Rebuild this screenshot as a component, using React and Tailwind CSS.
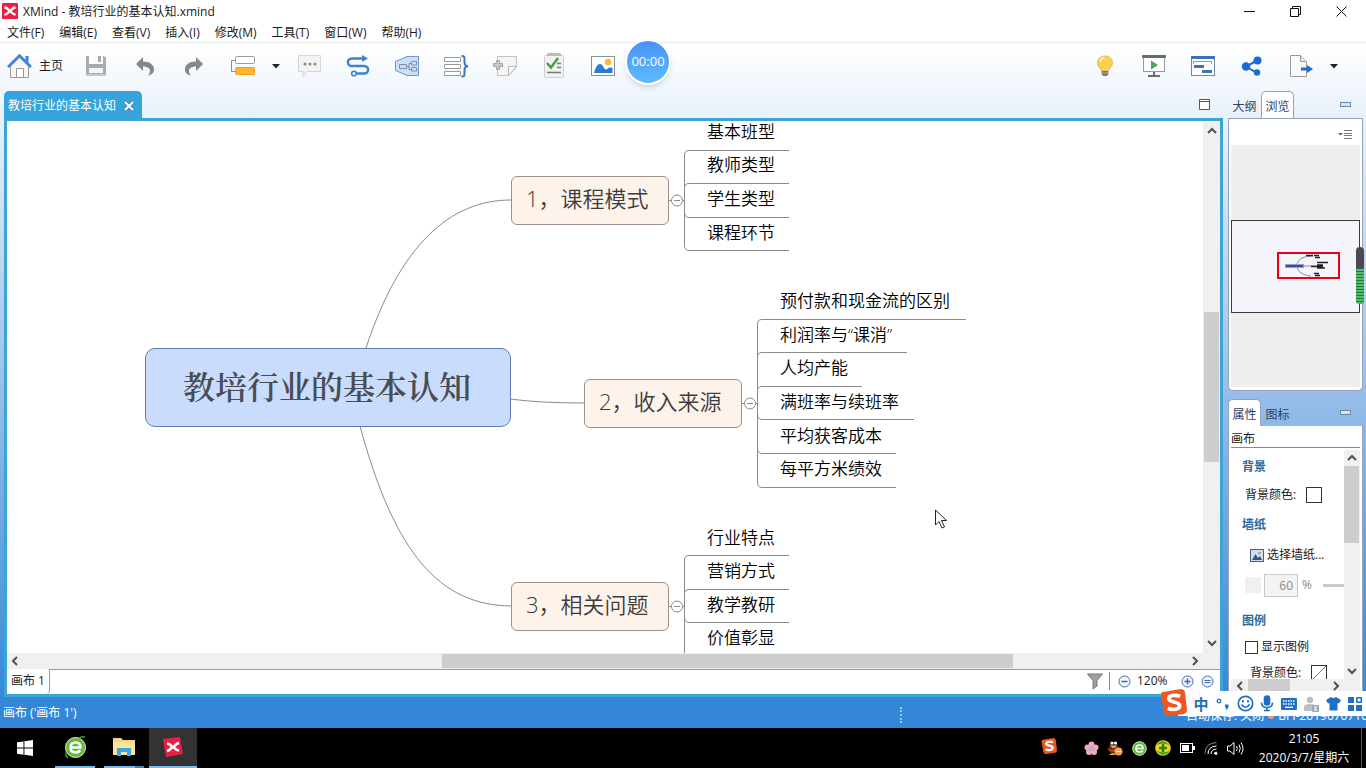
import { useState } from 'react';

const menus = ['文件(F)', '编辑(E)', '查看(V)', '插入(I)', '修改(M)', '工具(T)', '窗口(W)', '帮助(H)'];

// Positions are in canvas coordinates
const mainTopics = [
    { text: '1，课程模式', x: 504, y: 55 },
    { text: '2，收入来源', x: 577, y: 258 },
    { text: '3，相关问题', x: 504, y: 461 }
];

const branches = [
    {
        x: 677,
        midY: 79,
        items: [
            { text: '基本班型', y: 12, line: 29, end: 782 },
            { text: '教师类型', y: 45, line: 62, end: 782 },
            { text: '学生类型', y: 79, line: 96, end: 782 },
            { text: '课程环节', y: 113, line: 129, end: 782 }
        ]
    },
    {
        x: 750,
        midY: 282,
        items: [
            { text: '预付款和现金流的区别', y: 181, line: 198, end: 959 },
            { text: '利润率与“课消”', y: 215, line: 231, end: 900 },
            { text: '人均产能', y: 248, line: 265, end: 855 },
            { text: '满班率与续班率', y: 282, line: 298, end: 907 },
            { text: '平均获客成本', y: 316, line: 332, end: 889 },
            { text: '每平方米绩效', y: 349, line: 366, end: 889 }
        ]
    },
    {
        x: 677,
        midY: 485,
        items: [
            { text: '行业特点', y: 418, line: 434, end: 782 },
            { text: '营销方式', y: 451, line: 468, end: 782 },
            { text: '教学教研', y: 485, line: 501, end: 782 },
            { text: '价值彰显', y: 518, line: 536, end: 782 }
        ]
    }
];

const XMindMark = () => (
    <svg width="16" height="16" viewBox="0 0 16 16">
        <rect width="16" height="16" rx="1" fill="#ee1c46" />
        <path d="M2.500 4.500C6 4.500 6 7 8 8C10 7 10 4.500 13.500 4.500M2.500 11.500C6 11.500 6 9 8 8C10 9 10 11.500 13.500 11.500" stroke="#fff" strokeWidth="2.400" fill="none" />
    </svg>
);

const HomeIcon = () => (
    <svg width="26" height="26" viewBox="0 0 26 26" fill="none">
        <path d="M4.500 13V24.500H22.500V13L13.500 4.500Z" fill="#f7f7f7" stroke="#9a9a9a" />
        <path d="M10.500 24V15.500H17.500V24" fill="#fff" stroke="#9a9a9a" />
        <path d="M19.500 3H22.500V10L19.500 7Z" fill="#3f7fd0" />
        <path d="M2 14L13.500 2.500L25 14" stroke="#3f85dc" strokeWidth="2.600" />
    </svg>
);

const SaveIcon = () => (
    <svg width="24" height="24" viewBox="0 0 24 24">
        <path d="M2 2H5V10H19V2H20L22 4V22H2Z" fill="#ababab" />
        <path d="M14 2H17V8H14Z" fill="#ababab" />
        <rect x="5" y="14" width="14" height="5" fill="#f4f4f4" />
        <rect x="2" y="20" width="20" height="2" fill="#c8c8c8" />
    </svg>
);

const UndoIcon = () => (
    <svg width="22" height="22" viewBox="0 0 22 22">
        <path d="M2 9L9 2V6.500C16 6.500 20 10 20 14.500C20 18 17.500 20 14 20.500C15.500 18.500 16 17.500 16 16C16 13 13 11.500 9 11.500V16Z" fill="#858789" />
    </svg>
);

const RedoIcon = () => (
    <svg width="22" height="22" viewBox="0 0 22 22">
        <path d="M20 9L13 2V6.500C6 6.500 2 10 2 14.500C2 18 4.500 20 8 20.500C6.500 18.500 6 17.500 6 16C6 13 9 11.500 13 11.500V16Z" fill="#858789" />
    </svg>
);

const TopicIcon = () => (
    <svg width="26" height="24" viewBox="0 0 26 24" fill="none">
        <path d="M5 6.500H1.500V17.500H5" stroke="#8a8a8a" />
        <rect x="5.500" y="2.500" width="19" height="7" rx="1" fill="#fff" stroke="#9b9b9b" />
        <rect x="5.500" y="13.500" width="19" height="7" rx="1" fill="#fbb62c" stroke="#eda01c" />
    </svg>
);

const CommentIcon = () => (
    <svg width="26" height="26" viewBox="0 0 26 26">
        <path d="M2.500 2.500H24.500V18.500H11L7 23.500V18.500H2.500Z" fill="#f3f3f3" stroke="#d6d6d6" />
        <circle cx="9" cy="11" r="1.500" fill="#888" />
        <circle cx="14" cy="11" r="1.500" fill="#888" />
        <circle cx="19" cy="11" r="1.500" fill="#888" />
    </svg>
);

const RelationIcon = () => (
    <svg width="24" height="24" viewBox="0 0 24 24" fill="none">
        <path d="M18 4.500H6C0.500 4.500 0.500 12 6 12H18C23.500 12 23.500 19.500 18 19.500H10" stroke="#3c82cc" strokeWidth="2.400" />
        <path d="M16 1L22 4.500L16 8Z" fill="#3c82cc" />
        <circle cx="8" cy="19.500" r="2.300" fill="#fff" stroke="#3c82cc" strokeWidth="1.600" />
    </svg>
);

const BoundaryIcon = () => (
    <svg width="26" height="24" viewBox="0 0 26 24" fill="none">
        <path d="M1.500 7.500L13 2.500H24.500V21.500H13L1.500 16.500Z" fill="#cadff5" stroke="#6d97c8" />
        <path d="M5.500 10.500H12.500V14.500H5.500ZM17.500 7.500H22.500V11H17.500ZM17.500 13.500H22.500V17H17.500ZM12.500 12.500H15V9.500H17.500M15 12.500V15.500H17.500" stroke="#7f93ab" />
    </svg>
);

const SummaryIcon = () => (
    <svg width="26" height="24" viewBox="0 0 26 24" fill="none">
        <path d="M1.500 3.500H17.500V7.500H1.500ZM1.500 10.500H17.500V14.500H1.500ZM1.500 17.500H17.500V21.500H1.500Z" fill="#fff" stroke="#9a9a9a" />
        <path d="M18.500 2C22 2 21.500 3 21.500 8C21.500 11 22.500 12.300 25 12.300C22.500 12.300 21.500 14 21.500 16.500C21.500 21.500 22 22.500 18.500 22.500" stroke="#3a78bf" strokeWidth="2" />
    </svg>
);

const NoteIcon = () => (
    <svg width="26" height="24" viewBox="0 0 26 24">
        <path d="M5.500 2.500H24.500V13L17 21.500H5.500Z" fill="#f5f5f5" stroke="#c3c3c3" />
        <path d="M24.500 12.500H16.500V21.500Z" fill="#fff" stroke="#b8b8b8" />
        <path d="M4.500 6.500H7.500V9.500H10.500V12.500H7.500V15.500H4.500V12.500H1.500V9.500H4.500Z" fill="#c9c9c9" stroke="#a3a3a3" />
    </svg>
);

const TaskIcon = () => (
    <svg width="24" height="28" viewBox="0 0 24 28" fill="none">
        <rect x="2.500" y="3.500" width="19" height="22" rx="1" fill="#f1f1ef" stroke="#cfcfcf" />
        <rect x="5" y="1" width="14" height="3" rx="1" fill="#c9b7a4" />
        <path d="M5 11L9 15.500L16 6" stroke="#4a9a45" strokeWidth="2.400" />
        <path d="M15 11.500H19M15 15.500H19M5 20.500H19" stroke="#777" strokeWidth="1.500" />
    </svg>
);

const ImageIcon = () => (
    <svg width="26" height="24" viewBox="0 0 26 24">
        <rect x="1.500" y="2.500" width="23" height="19" fill="#fff" stroke="#8b8f94" />
        <circle cx="18" cy="8" r="3.200" fill="#fcb930" />
        <path d="M4 19C5 15 7 10 10 10C13 10 14 15.500 16 15.500C18 15.500 18 12.500 22.500 14V19Z" fill="#2e7dcc" />
    </svg>
);

const BulbIcon = () => (
    <svg width="20" height="24" viewBox="0 0 24 28">
        <path d="M12 2C7 2 3 5.500 3 10.300C3 15 7.500 16 8 20H16C16.500 16 21 15 21 10.300C21 5.500 17 2 12 2Z" fill="#fbd052" stroke="#e5a83a" />
        <path d="M6.500 9C6.500 6 8.500 4 11.500 4" stroke="#fff0b8" strokeWidth="2" fill="none" />
        <path d="M8 20H16V24L14 26H10L8 24Z" fill="#777" />
        <path d="M8 22.500H16" stroke="#bbb" />
    </svg>
);

const PresentIcon = () => (
    <svg width="26" height="24" viewBox="0 0 26 24">
        <rect x="2.500" y="3.500" width="21" height="14" fill="#fff" stroke="#999" />
        <rect x="1" y="1" width="24" height="3" rx="1" fill="#6a6a6a" />
        <path d="M10 6.500L17 11L10 15.500Z" fill="#4da356" />
        <path d="M12 18H14V21H19V23H7V21H12Z" fill="#6a6a6a" />
    </svg>
);

const GanttIcon = () => (
    <svg width="26" height="24" viewBox="0 0 26 24">
        <rect x="1.500" y="2.500" width="23" height="19" fill="#fff" stroke="#6f87a6" />
        <rect x="1" y="2" width="24" height="3" fill="#3f73b5" />
        <path d="M3.500 10V7.500H21.500V10" stroke="#8b97a5" fill="none" />
        <rect x="4" y="11" width="10" height="3" fill="#3f73b5" />
        <rect x="12" y="16" width="10" height="3" fill="#3f73b5" />
    </svg>
);

const ShareIcon = () => (
    <svg width="24" height="24" viewBox="0 0 24 24">
        <path d="M18 6L6 12.500L17 19" stroke="#1b68cf" strokeWidth="2" fill="none" />
        <circle cx="17.500" cy="6.500" r="4" fill="#1b6ad6" />
        <circle cx="6" cy="12.500" r="4.200" fill="#1b6ad6" />
        <circle cx="17" cy="18.500" r="3.200" fill="#1b6ad6" />
    </svg>
);

const ExportIcon = () => (
    <svg width="26" height="24" viewBox="0 0 26 24">
        <path d="M2.500 1.500H12.500L18.500 7.500V22.500H2.500Z" fill="#f9f9f9" stroke="#9a9a9a" />
        <path d="M12.500 1.500V7.500H18.500" fill="#e6e6e6" stroke="#9a9a9a" />
        <path d="M13 13.500H19V11L25 15L19 19V16.500H13Z" fill="#1e6cd2" />
    </svg>
);

const Caret = () => (
    <svg width="8" height="5" viewBox="0 0 8 5">
        <path d="M0 0H8L4 4.500Z" fill="#222" />
    </svg>
);

const Chevron = ({ dir }) => {
    const paths = {
        up: 'M2 8L6 4L10 8',
        down: 'M2 4L6 8L10 4',
        left: 'M8 2L4 6L8 10',
        right: 'M4 2L8 6L4 10'
    };
    return (
        <svg width="12" height="12" viewBox="0 0 12 12">
            <path d={paths[dir]} stroke="#505050" strokeWidth="2" fill="none" />
        </svg>
    );
};

const SogouMark = ({ size }) => (
    <svg width={size} height={size} viewBox="0 0 26 26">
        <path d="M1 6Q0 4 3 3L20 0Q23 0 24 3L26 20Q26 23 23 24L8 26Q5 26 4 23Z" fill="#f0561d" />
        <path d="M19.500 7C15 5.500 8.500 5.500 8.500 9.500C8.500 13.500 19 11.500 19 16C19 20 12 20.500 7.500 18.500" stroke="#fff" strokeWidth="3.600" fill="none" />
    </svg>
);

const ToolButton = ({ label, children }) => (
    <button aria-label={label} className="w-[49px] h-12 pb-0.5 flex items-center justify-center">
        {children}
    </button>
);

const VerticalScrollbar = () => (
    <div className="w-[17px] shrink-0 bg-[#f0f0f0] flex flex-col">
        <button aria-label="向上滚动" className="h-5 flex items-center justify-center"><Chevron dir="up" /></button>
        <div className="flex-1 flex flex-col">
            <div className="grow-[171] basis-0"></div>
            <div className="grow-[151] basis-0 bg-[#cdcdcd] mx-px"></div>
            <div className="grow-[171] basis-0"></div>
        </div>
        <button aria-label="向下滚动" className="h-5 flex items-center justify-center"><Chevron dir="down" /></button>
    </div>
);

const HorizontalScrollbar = () => (
    <div className="h-4 flex bg-[#f0f0f0]">
        <button aria-label="向左滚动" className="w-4 flex items-center justify-center"><Chevron dir="left" /></button>
        <div className="flex-1 flex">
            <div className="grow-[419] basis-0"></div>
            <div className="grow-[570] basis-0 bg-[#cdcdcd] my-px"></div>
            <div className="grow-[174] basis-0"></div>
        </div>
        <button aria-label="向右滚动" className="w-4 mr-[17px] flex items-center justify-center"><Chevron dir="right" /></button>
    </div>
);

const branchPath = (branch) => {
    const { x, midY, items } = branch;
    const top = items[0].line;
    const bottom = items[items.length - 1].line;
    let d = `M${x + 0.5} ${top + 5}V${bottom - 5}`;
    items.forEach(({ line, end }) => {
        const bend = line < midY ? 5 : -5;
        d += `M${x + 0.5} ${line + bend}Q${x + 0.5} ${line + 0.5} ${x + 5} ${line + 0.5}H${end}`;
    });
    return d;
};

const MindMap = () => (
    <div className="relative flex-1 min-w-0 overflow-hidden bg-white">
        <svg className="absolute inset-0 w-full h-full" fill="none" stroke="#8a8a8a">
            <path d="M504 79C443 79 393 124 359 227" />
            <path d="M503 278Q533 282 577 282" />
            <path d="M353 305C388 434 433 484 504 485" />
            {branches.map((branch) => (
                <g key={branch.midY}>
                    <path d={`M${branch.x - 15} ${branch.midY + 0.5}H${branch.x}`} />
                    <path d={branchPath(branch)} />
                    <circle cx={branch.x - 7} cy={branch.midY + 0.5} r="5.500" fill="#fff" />
                    <path d={`M${branch.x - 10} ${branch.midY + 0.5}h6`} />
                </g>
            ))}
        </svg>

        <div className="absolute left-[138px] top-[227px] w-[366px] h-[79px] pb-1 pr-0.5 rounded-[10px] border border-[#5f7dae] bg-[#c9dcfc] flex items-center justify-center text-[32px] font-semibold text-[#4a4c53] font-['Noto_Serif_CJK_SC','Noto_Sans_CJK_SC',serif] whitespace-nowrap">
            教培行业的基本认知
        </div>

        {mainTopics.map((topic) => (
            <div
                key={topic.text}
                style={{ left: topic.x, top: topic.y }}
                className="absolute w-[158px] h-[49px] pb-1 rounded-md border border-[#a08f86] bg-[#fef3eb] flex items-center pl-3.5 text-[22px] font-[350] text-[#3c3c3c] whitespace-nowrap"
            >
                {topic.text}
            </div>
        ))}

        {branches.map((branch) =>
            branch.items.map((item) => (
                <div
                    key={item.text}
                    style={{ left: branch.x + 23, top: item.y - 12 }}
                    className="absolute h-6 pb-0.5 flex items-center text-[17px] font-[350] text-black whitespace-nowrap"
                >
                    {item.text}
                </div>
            ))
        )}

        {/* Mouse pointer */}
        <svg className="absolute left-[928px] top-[388px]" width="13" height="21" viewBox="0 0 13 21">
            <path d="M0.500 1V16L4 12.500L7 19L9.500 18L6.500 11.500H11.500Z" fill="#fff" stroke="#222" />
        </svg>
    </div>
);

const ZoomIcon = ({ sign }) => (
    <svg width="13" height="13" viewBox="0 0 13 13" fill="none" stroke="#3b6ea8">
        <circle cx="6.500" cy="6.500" r="5.500" fill="#f1f6fc" />
        {sign === '-' && <path d="M3.500 6.500H9.500" strokeWidth="1.500" />}
        {sign === '+' && <path d="M3.500 6.500H9.500M6.500 3.500V9.500" strokeWidth="1.500" />}
        {sign === '=' && <path d="M3.500 5.500H9.500M3.500 7.500H9.500" />}
    </svg>
);

const Editor = () => (
    <section className="flex-1 min-w-0 flex flex-col">
        <div className="h-[27px] flex items-end justify-between">
            <div className="h-[27px] w-[138px] rounded-t-[5px] bg-[#35a4db] text-white flex items-center justify-between pl-1 pr-2 pt-0.5">
                <span className="whitespace-nowrap">教培行业的基本认知</span>
                <button aria-label="关闭标签">
                    <svg width="10" height="10" viewBox="0 0 10 10">
                        <path d="M1 1L9 9M9 1L1 9" stroke="#2b6f96" strokeWidth="3.600" />
                        <path d="M1 1L9 9M9 1L1 9" stroke="#fff" strokeWidth="2.400" />
                    </svg>
                </button>
            </div>
            <button aria-label="最大化" className="mr-[13px] mb-2">
                <svg width="11" height="11" viewBox="0 0 11 11">
                    <path d="M0.500 0.500H10.500V10.500H0.500ZM0.500 2.500H10.500" fill="#fff" stroke="#555" />
                </svg>
            </button>
        </div>

        <div className="flex-1 min-h-0 flex flex-col border-[3px] border-[#3da5d6] bg-white">
            <div className="flex-1 min-h-0 flex">
                <MindMap />
                <VerticalScrollbar />
            </div>
            <HorizontalScrollbar />
            <div className="h-[25px] flex items-stretch">
                <button className="w-[43px] shrink-0 pb-0.5 border-r border-[#999] rounded-br-sm text-center whitespace-nowrap">画布 1</button>
                <div className="flex-1 flex items-center justify-end border-t border-[#999] pb-0.5 pr-[6px]">
                    <button aria-label="筛选">
                        <svg width="16" height="17" viewBox="0 0 16 17">
                            <path d="M0.500 1H15.500L10 7.500V13L6 16V7.500Z" fill="#a0a0a0" stroke="#777" />
                        </svg>
                    </button>
                    <span className="w-px h-[18px] bg-[#888] ml-1.5 mr-2"></span>
                    <button aria-label="缩小"><ZoomIcon sign="-" /></button>
                    <span className="w-[50px] pl-1.5">120%</span>
                    <button aria-label="放大"><ZoomIcon sign="+" /></button>
                    <button aria-label="适合大小" className="ml-[7px]"><ZoomIcon sign="=" /></button>
                </div>
            </div>
        </div>
    </section>
);

const PanelTabs = ({ tabs, active, onSelect }) => (
    <div className="h-[27px] flex items-stretch text-[#2f4263]">
        {tabs.map((tab) => (
            <button
                key={tab}
                onClick={() => onSelect(tab)}
                className={`w-[33px] shrink-0 pt-1 text-center whitespace-nowrap ${active === tab ? 'bg-white rounded-t-[5px] border border-b-0 border-[#93a3b8]' : ''}`}
            >
                {tab}
            </button>
        ))}
        <button aria-label="最小化面板" className="ml-auto mr-3 flex items-center">
            <svg width="11" height="5" viewBox="0 0 11 5">
                <rect x="0.500" y="0.500" width="10" height="4" fill="#d5e5f5" stroke="#6d8aa8" />
            </svg>
        </button>
    </div>
);

const OverviewPanel = () => {
    const [tab, setTab] = useState('浏览');

    return (
        <section className="flex flex-col">
            <PanelTabs tabs={['大纲', '浏览']} active={tab} onSelect={setTab} />
            <div className="h-[273px] bg-white border border-[#93a3b8] rounded-b-[5px] px-0.5 pb-[3px] flex flex-col">
                <div className="h-[26px] flex items-center justify-end pr-2 pt-1">
                    <button aria-label="视图菜单">
                        <svg width="14" height="9" viewBox="0 0 14 9">
                            <path d="M0 3H5L2.500 5.500Z" fill="#666" />
                            <path d="M6 0.500H14M6 3.500H14M6 5.500H14M6 8.500H14" stroke="#777" />
                        </svg>
                    </button>
                </div>
                <div className="flex-1 bg-[#eeeeee] flex items-center">
                    <div className="w-full h-[93px] border border-[#3a3a3a] bg-[#f3f5fb] pl-[45px] pt-[31px]">
                        <div className="w-[63px] h-[27px] border-2 border-[#e60012]">
                            <svg width="59" height="23" viewBox="0 0 59 23" fill="none">
                                <path d="M34 2C22 2 18 7 18 11C18 16 21 21 32 22M24 12H40" stroke="#8c8c94" />
                                <rect x="6.500" y="10.500" width="18" height="3" fill="#3d4d8c" stroke="#8ea0dd" />
                                <path d="M27 1.500H34M35 1.500H40M36 3.500H41M38 8.500H49M38 11H44M32 12.500H44M38 14H46M35 19.500H40M36 21.500H41" stroke="#222" strokeWidth="1.500" />
                            </svg>
                        </div>
                    </div>
                </div>
            </div>
        </section>
    );
};

const PropertiesPanel = () => {
    const [tab, setTab] = useState('属性');
    const [showLegend, setShowLegend] = useState(false);

    return (
        <section className="flex-1 min-h-0 flex flex-col mt-2">
            <PanelTabs tabs={['属性', '图标']} active={tab} onSelect={setTab} />
            <div className="flex-1 min-h-0 bg-white border-x border-[#93a3b8] px-0.5 flex flex-col">
                <div className="h-[22px] flex items-center border-b border-[#888] pt-1">画布</div>
                <div className="flex-1 min-h-0 flex">
                    <div className="flex-1 min-w-0 overflow-hidden flex flex-col pl-[11px] pt-[9px] whitespace-nowrap">
                        <h3 className="h-5 shrink-0 flex items-center font-semibold text-[#2b6a9a]">背景</h3>
                        <div className="h-6 mt-1.5 pl-[3px] shrink-0 flex items-center">
                            <span>背景颜色:</span>
                            <button aria-label="背景颜色" className="ml-[10px] size-4 border border-[#333] bg-white"></button>
                        </div>
                        <h3 className="h-5 mt-2 shrink-0 flex items-center font-semibold text-[#2b6a9a]">墙纸</h3>
                        <button className="h-6 mt-2 pl-2 shrink-0 flex items-center gap-[3px]">
                            <svg width="14" height="13" viewBox="0 0 14 13">
                                <rect x="0.500" y="0.500" width="13" height="12" fill="#cfe0f2" stroke="#4a5f78" />
                                <circle cx="9.500" cy="4" r="1.300" fill="#d98b4a" />
                                <path d="M2 11L5.500 5L8 9L10 7L12 11Z" fill="#35587f" />
                            </svg>
                            选择墙纸...
                        </button>
                        <div className="h-6 mt-1.5 pl-[3px] shrink-0 flex items-center text-[#8a8a8a]">
                            <span className="size-4 shrink-0 bg-[#f0f0f0]"></span>
                            <input aria-label="不透明度" defaultValue="60" disabled className="ml-[3px] w-[34px] h-[23px] shrink-0 border border-[#c8c8c8] bg-[#f3f3f3] text-right pr-1" />
                            <span className="ml-1 w-[21px] shrink-0">%</span>
                            <span className="h-[3px] w-8 shrink-0 bg-[#c9c9c9]"></span>
                        </div>
                        <h3 className="h-5 mt-3.5 shrink-0 flex items-center font-semibold text-[#2b6a9a]">图例</h3>
                        <label className="h-6 mt-1 pl-[3px] shrink-0 flex items-center gap-[3px]">
                            <input
                                type="checkbox"
                                checked={showLegend}
                                onChange={(e) => setShowLegend(e.target.checked)}
                                className="appearance-none size-[13px] border border-[#333] bg-white checked:bg-[#22618f]"
                            />
                            显示图例
                        </label>
                        <div className="h-6 mt-0.5 pl-2 shrink-0 flex items-center">
                            <span>背景颜色:</span>
                            <button aria-label="图例背景颜色" className="ml-[10px] size-4 border border-[#333] bg-white">
                                <svg width="14" height="14" viewBox="0 0 14 14">
                                    <path d="M0 14L14 0" stroke="#e0405a" />
                                </svg>
                            </button>
                        </div>
                    </div>
                    <div className="w-4 shrink-0 mt-0.5 bg-[#f0f0f0] flex flex-col">
                        <button aria-label="向上滚动" className="h-4 flex items-center justify-center"><Chevron dir="up" /></button>
                        <div className="h-[77px] mr-px bg-[#cdcdcd]"></div>
                        <button aria-label="向下滚动" className="h-4 mt-auto flex items-center justify-center"><Chevron dir="down" /></button>
                    </div>
                </div>
                <div className="h-[18px] pb-1 shrink-0 bg-[#f0f0f0] flex items-stretch">
                    <button aria-label="向左滚动" className="w-[17px] flex items-center justify-center"><Chevron dir="left" /></button>
                    <div className="w-[42px] bg-[#cdcdcd]"></div>
                    <button aria-label="向右滚动" className="w-[17px] ml-auto mr-4 flex items-center justify-center"><Chevron dir="right" /></button>
                </div>
            </div>
        </section>
    );
};

// Input method bar floating above the status bar
const ImeBar = () => (
    <div className="absolute right-0 bottom-[52px] h-[25px] w-[188px] bg-white flex items-center pl-3 text-[#1f6fc4]">
        <div className="absolute -left-[18px] -top-[2px]"><SogouMark size={27} /></div>
        <button className="w-[22px] shrink-0 text-[15px] leading-5 font-bold">中</button>
        <button aria-label="标点" className="w-[22px] shrink-0 flex justify-center">
            <svg width="14" height="14" viewBox="0 0 14 14">
                <circle cx="3" cy="4" r="1.800" fill="none" stroke="#1f6fc4" strokeWidth="1.300" />
                <path d="M9 7.500H12.500V10Q12 12.500 9 13.500Q10.500 12 10.200 10.500H9Z" fill="#1f6fc4" />
            </svg>
        </button>
        <button aria-label="表情" className="w-[22px] shrink-0 flex justify-center">
            <svg width="17" height="17" viewBox="0 0 17 17" fill="none" stroke="#1f6fc4" strokeWidth="1.700">
                <circle cx="8.500" cy="8.500" r="7.200" />
                <path d="M4.500 9.500Q8.500 15 12.500 9.500M6 5V7.500M11 5V7.500" />
            </svg>
        </button>
        <button aria-label="语音" className="w-[22px] shrink-0 flex justify-center">
            <svg width="14" height="17" viewBox="0 0 14 17" fill="none" stroke="#1f6fc4" strokeWidth="1.600">
                <rect x="4.500" y="1" width="5" height="9" rx="2.500" fill="#1f6fc4" />
                <path d="M1.500 7.500Q1.500 12.500 7 12.500Q12.500 12.500 12.500 7.500M7 12.500V15.500M4 15.500H10" />
            </svg>
        </button>
        <button aria-label="键盘" className="w-[22px] shrink-0 flex justify-center">
            <svg width="16" height="12" viewBox="0 0 16 12">
                <rect width="16" height="12" rx="1" fill="#1f6fc4" />
                <path d="M2 3H14M2 6H14" stroke="#fff" strokeWidth="1.500" strokeDasharray="1.500 1" />
                <path d="M4 9.300H12" stroke="#fff" strokeWidth="1.300" />
            </svg>
        </button>
        <button aria-label="账号" className="w-[22px] shrink-0 flex justify-center">
            <svg width="15" height="16" viewBox="0 0 15 16">
                <circle cx="6" cy="4" r="3.200" fill="#b9bfc8" />
                <path d="M0 15V11Q0 8 6 8Q12 8 12 11V15Z" fill="#b9bfc8" />
                <rect x="8" y="9" width="7" height="7" rx="1" fill="#9aa7b8" />
                <path d="M10 11H13L10 14H13" stroke="#fff" fill="none" />
            </svg>
        </button>
        <button aria-label="皮肤" className="w-[22px] shrink-0 flex justify-center">
            <svg width="15" height="15" viewBox="0 0 15 15">
                <path d="M5 1Q7.500 3 10 1L15 4L13 7.500L11.500 7V14.500H3.500V7L2 7.500L0 4Z" fill="#1f6fc4" />
            </svg>
        </button>
        <button aria-label="工具箱" className="w-[22px] shrink-0 flex justify-center">
            <svg width="14" height="14" viewBox="0 0 14 14" fill="#1f6fc4">
                <path d="M0 0H6V6H0ZM0 8H6V14H0ZM8 8H14V14H8Z" />
                <rect x="8.800" y="0.800" width="4.400" height="4.400" fill="none" stroke="#1f6fc4" strokeWidth="1.500" />
            </svg>
        </button>
    </div>
);

const Taskbar = () => (
    <footer className="h-10 shrink-0 bg-black text-white flex items-stretch justify-between">
        <div className="flex gap-px">
            <button aria-label="开始" className="w-[50px] flex items-center justify-center">
                <svg width="16" height="16" viewBox="0 0 16 16" fill="#fff">
                    <path d="M0 2.300L6.500 1.400V7.600H0ZM7.400 1.300L16 0V7.600H7.400ZM0 8.500H6.500V14.700L0 13.800ZM7.400 8.500H16V16L7.400 14.800Z" />
                </svg>
            </button>
            <button aria-label="浏览器" className="w-12 px-1 flex flex-col items-center">
                <span className="flex-1 flex items-center">
                    <svg width="23" height="23" viewBox="0 0 23 23" fill="none">
                        <circle cx="11.500" cy="11.500" r="10" fill="#66bb34" stroke="#e4f5d4" />
                        <path d="M6.500 11.500H16.500Q16.500 6.500 11.500 6.500Q6.500 6.500 6.500 11.500Q6.500 16.500 11.500 16.500Q15 16.500 16 14" stroke="#fff" strokeWidth="2.500" />
                        <path d="M15 2Q19 0 21 1M2.500 16Q1 21 4 22" stroke="#3c9a22" strokeWidth="1.500" />
                    </svg>
                </span>
                <span className="w-full h-0.5 bg-[#76b9ed]"></span>
            </button>
            <button aria-label="文件资源管理器" className="w-12 px-1 flex flex-col items-center">
                <span className="flex-1 flex items-center">
                    <svg width="22" height="20" viewBox="0 0 22 20">
                        <path d="M0 1H8L10 3H22V18H0Z" fill="#f5d67a" />
                        <path d="M0 5H22V18H0Z" fill="#fbe59a" />
                        <path d="M4 11H18V19H14V15H8V19H4Z" fill="#3ba9dd" />
                    </svg>
                </span>
                <span className="w-full h-0.5 flex">
                    <span className="flex-1 bg-[#76b9ed]"></span>
                    <span className="w-[9px] bg-[#4f7ea3]"></span>
                </span>
            </button>
            <button aria-label="XMind" className="w-12 bg-[#333] flex flex-col items-center">
                <span className="flex-1 flex items-center">
                    <svg width="22" height="22" viewBox="0 0 22 22">
                        <path d="M1 3L18 1L21 18L4 21Z" fill="#e81f45" />
                        <path d="M5 7.500C9 8 9 10.500 11 11C13 10.500 13 8 17 7M5 15C9 14 9 11.500 11 11C13 11.500 13 14 17 14.500" stroke="#fff" strokeWidth="2.600" fill="none" />
                    </svg>
                </span>
                <span className="w-full h-0.5 bg-[#76b9ed]"></span>
            </button>
        </div>

        <div className="flex items-center pr-1">
            <span className="w-6 mr-[18px] pb-1 flex justify-center"><SogouMark size={16} /></span>
            <span className="w-6 flex justify-center">
                <svg width="15" height="15" viewBox="0 0 15 15" fill="#f3a9b6">
                    <circle cx="7.500" cy="3.500" r="3" /><circle cx="3.500" cy="6.500" r="3" /><circle cx="11.500" cy="6.500" r="3" />
                    <circle cx="5" cy="11" r="3" /><circle cx="10" cy="11" r="3" /><circle cx="7.500" cy="7.500" r="2.500" fill="#b8a9dc" />
                </svg>
            </span>
            <span className="w-6 flex justify-center">
                <svg width="16" height="16" viewBox="0 0 16 16">
                    <ellipse cx="6.500" cy="8" rx="5" ry="6" fill="#3a2a26" />
                    <circle cx="5" cy="3" r="1.600" fill="#fff" />
                    <circle cx="8.500" cy="3" r="1.600" fill="#fff" />
                    <path d="M3 5.500H10L8 8H5Z" fill="#f4a81d" />
                    <path d="M0 8Q6 11 12 7V11Q6 13 2 11Z" fill="#dd2a22" />
                    <path d="M2 15Q6 11 9 15Z" fill="#f4a81d" />
                    <circle cx="11.500" cy="11.500" r="4" fill="#f0a055" />
                    <path d="M9 11.500H14" stroke="#fff" />
                </svg>
            </span>
            <span className="w-6 flex justify-center">
                <svg width="15" height="15" viewBox="0 0 15 15" fill="none">
                    <circle cx="7.500" cy="7.500" r="6.800" fill="#5cb832" stroke="#d5f0c5" />
                    <path d="M4 7.500H11Q11 4 7.500 4Q4 4 4 7.500Q4 11 7.500 11Q10 11 10.800 9.500" stroke="#fff" strokeWidth="1.700" />
                </svg>
            </span>
            <span className="w-6 flex justify-center">
                <svg width="16" height="16" viewBox="0 0 16 16">
                    <circle cx="8" cy="8" r="7.800" fill="#f5d416" />
                    <path d="M1 5Q8 -3 15 6Q10 2 1 5ZM15 11Q8 19 1 10Q6 14 15 11Z" fill="#44a52c" />
                    <path d="M8 4V12M4 8H12" stroke="#23831f" strokeWidth="2.500" />
                </svg>
            </span>
            <span className="w-6 flex justify-center">
                <svg width="15" height="10" viewBox="0 0 15 10">
                    <rect x="0.500" y="0.500" width="12" height="9" fill="none" stroke="#fff" />
                    <rect x="2" y="2" width="7" height="6" fill="#fff" />
                    <rect x="13" y="3" width="2" height="4" fill="#fff" />
                </svg>
            </span>
            <span className="w-6 flex justify-center">
                <svg width="14" height="14" viewBox="0 0 14 14" fill="none" stroke="#fff">
                    <path d="M1 12.500Q1 2 12.500 1.500" stroke="#8a8a8a" />
                    <path d="M4 13Q4 5.500 12.500 5M7 13Q7 8.500 12.500 8M10 13Q10 11.500 12.500 11" />
                    <circle cx="12" cy="12.500" r="1" fill="#fff" />
                </svg>
            </span>
            <span className="w-6 flex justify-center">
                <svg width="17" height="15" viewBox="0 0 17 15" fill="none" stroke="#fff">
                    <path d="M0.500 5H3L7 1.500V13.500L3 10H0.500Z" />
                    <path d="M9.500 5Q11 7.500 9.500 10M12 3.500Q14.500 7.500 12 11.500M14 1.500Q18 7.500 14 13.500" />
                </svg>
            </span>
            <div className="w-[114px] text-center leading-[19px] whitespace-nowrap">
                <div>21:05</div>
                <div>2020/3/7/星期六</div>
            </div>
            <span className="w-px self-stretch bg-[#555]"></span>
        </div>
    </footer>
);

const App = () => {
    return (
        <div className="relative h-screen min-h-[600px] overflow-hidden flex flex-col bg-white text-xs text-[#1a1a1a] font-['Open_Sans','Noto_Sans_CJK_SC',sans-serif]">
            {/* Title bar */}
            <header className="h-[22px] shrink-0 flex items-center justify-between pl-0.5 pr-0.5">
                <div className="flex items-center gap-[5px]">
                    <XMindMark />
                    <h1 className="pt-0.5">XMind - 教培行业的基本认知.xmind</h1>
                </div>
                <div className="flex">
                    <button aria-label="最小化" className="w-[46px] h-5 flex items-center justify-center">
                        <svg width="11" height="11" viewBox="0 0 11 11"><path d="M0 5.500H11" stroke="#111" /></svg>
                    </button>
                    <button aria-label="还原" className="w-[46px] h-5 flex items-center justify-center">
                        <svg width="11" height="11" viewBox="0 0 11 11" fill="none" stroke="#111"><path d="M0.500 2.500H8.500V10.500H0.500ZM2.500 2.500V0.500H10.500V8.500H8.500" /></svg>
                    </button>
                    <button aria-label="关闭" className="w-[46px] h-5 flex items-center justify-center">
                        <svg width="11" height="11" viewBox="0 0 11 11" stroke="#111"><path d="M0.500 0.500L10.500 10.500M10.500 0.500L0.500 10.500" /></svg>
                    </button>
                </div>
            </header>

            <nav className="h-[21px] shrink-0 flex items-center gap-[15px] pl-[7px] pt-0.5 border-b border-[#ececec]">
                {menus.map((menu) => (
                    <button key={menu} className="whitespace-nowrap">{menu}</button>
                ))}
            </nav>

            <div className="flex-1 min-h-0 flex flex-col bg-[linear-gradient(to_bottom,#ffffff_0%,#e7f1fa_11%,#93bce8_53%,#3487d8_96%)]">
                {/* Toolbar */}
                <div className="h-12 shrink-0 flex items-center justify-between pr-6">
                    <div className="flex items-center">
                        <button className="w-[71px] h-12 pl-1.5 pb-0.5 flex items-center gap-[7px] whitespace-nowrap">
                            <HomeIcon />
                            主页
                        </button>
                        <ToolButton label="保存"><SaveIcon /></ToolButton>
                        <ToolButton label="撤销"><UndoIcon /></ToolButton>
                        <ToolButton label="重做"><RedoIcon /></ToolButton>
                        <ToolButton label="主题"><TopicIcon /></ToolButton>
                        <button aria-label="更多主题" className="w-[17px] pb-0.5 flex justify-center"><Caret /></button>
                        <ToolButton label="批注"><CommentIcon /></ToolButton>
                        <ToolButton label="联系"><RelationIcon /></ToolButton>
                        <ToolButton label="外框"><BoundaryIcon /></ToolButton>
                        <ToolButton label="概要"><SummaryIcon /></ToolButton>
                        <ToolButton label="备注"><NoteIcon /></ToolButton>
                        <ToolButton label="任务"><TaskIcon /></ToolButton>
                        <ToolButton label="图片"><ImageIcon /></ToolButton>
                    </div>
                    <div className="flex items-center">
                        <ToolButton label="头脑风暴"><BulbIcon /></ToolButton>
                        <ToolButton label="演示"><PresentIcon /></ToolButton>
                        <ToolButton label="甘特图"><GanttIcon /></ToolButton>
                        <ToolButton label="分享"><ShareIcon /></ToolButton>
                        <ToolButton label="导出"><ExportIcon /></ToolButton>
                        <button aria-label="更多导出" className="w-[17px] pb-0.5 flex justify-center"><Caret /></button>
                    </div>
                </div>

                <main className="flex-1 min-h-0 flex gap-[5px] pl-1 pr-[3px]">
                    <Editor />
                    <aside className="w-[135px] shrink-0 flex flex-col">
                        <OverviewPanel />
                        <PropertiesPanel />
                    </aside>
                </main>

                {/* Status bar */}
                <div className="h-[31px] shrink-0 flex items-center bg-[#3487d8] text-white pl-[3px]">
                    <span>画布 ('画布 1')</span>
                    <span className="ml-auto mt-1 h-4 border-l-2 border-dotted border-[#9cc6f0]"></span>
                    <span className="w-[464px] h-full flex items-center gap-1 pl-[284px] pt-1.5 whitespace-nowrap overflow-hidden">
                        自动保存: 关闭
                        <span className="size-1.5 shrink-0 rounded-full bg-[#e8a27c]"></span>
                        BFI-201907071028
                    </span>
                </div>
            </div>

            <Taskbar />
            <ImeBar />

            {/* Recording timer */}
            <div className="absolute left-[625px] top-[39px] size-[46px] rounded-full border-2 border-white bg-[linear-gradient(to_bottom,#4a92f7,#5cbcfd)] shadow-md flex items-center justify-center text-[13px] text-white">
                00:00
            </div>

            {/* Volume meter */}
            <div className="absolute right-0.5 top-[247px] w-2 h-[57px] rounded-full overflow-hidden bg-[#4a4a50]">
                <div className="mt-[22px] h-[35px] bg-[repeating-linear-gradient(to_bottom,#4fc06a_0px,#4fc06a_2px,#2f6e42_2px,#2f6e42_3px)]"></div>
            </div>
        </div>
    );
};

export default App;
